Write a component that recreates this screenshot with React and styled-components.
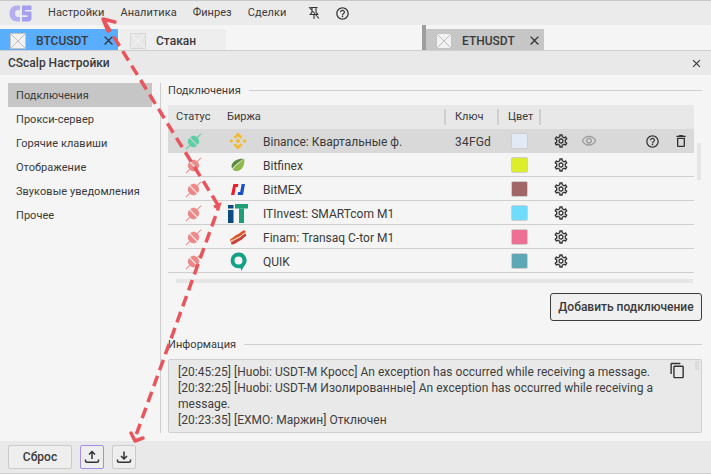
import React from 'react'
import styled, { createGlobalStyle } from 'styled-components'
import {
  MdOutlineSettings,
  MdOutlineVisibility,
  MdHelpOutline,
  MdOutlineDelete,
  MdOutlineContentCopy,
  MdClose,
} from 'react-icons/md'

const GlobalStyle = createGlobalStyle`
  html, body {
    margin: 0;
    padding: 0;
    background: #f5f5f5;
  }
  * { box-sizing: border-box; }
`

const Page = styled.div`
  position: relative;
  width: 711px;
  height: 474px;
  overflow: hidden;
  display: flex;
  flex-direction: column;
  background: #f5f5f5;
  color: #3a3a3a;
  font-family: Roboto, "Liberation Sans", sans-serif;
  font-size: 12px;
`

const MenuBar = styled.div`
  height: 25px;
  display: flex;
  align-items: center;
  padding-left: 9px;
  background: #ebebeb;
  border-top: 1px solid #c8c8c8;
`

const MenuItem = styled.span`
  margin-right: 16px;
  margin-bottom: 2px;
  font-size: 11px;
  letter-spacing: 0.05px;
`

const MenuIcon = styled.span`
  display: flex;
  width: 16px;
  justify-content: center;
  margin-left: 4px;
  margin-right: 8px;
`

const Logo = styled.svg`
  width: 23px;
  height: 17px;
  margin-right: 16px;
`

const TabBar = styled.div`
  height: 25px;
  display: flex;
  align-items: flex-end;
  background: #f5f5f5;
`

const Tab = styled.div`
  height: 21px;
  width: ${p => p.$width}px;
  margin-left: ${p => p.$gap || 0}px;
  display: flex;
  align-items: center;
  padding: 2px 0 0 10px;
  background: ${p => p.$bg};
  font-size: 12px;
  font-weight: 500;
  color: #3a3a3a;
`

const TabName = styled.span`
  margin-left: 10px;
  flex: 1;
`

const TabClose = styled(MdClose)`
  font-size: 15px;
  margin-right: 2px;
  color: #333;
`

const TabDivider = styled.div`
  width: 4px;
  height: 25px;
  margin-left: 196px;
  background: #9e9e9e;
`

const Thumb = styled.svg`
  width: 16px;
  height: 16px;
  flex: none;
`

const Window = styled.div`
  flex: 1;
  display: flex;
  flex-direction: column;
  border-top: 1px solid #cfcfcf;
  min-height: 0;
`

const TitleBar = styled.div`
  height: 24px;
  flex: none;
  display: flex;
  align-items: center;
  justify-content: space-between;
  padding: 0 8px;
  background: #e9e9e9;
  font-weight: 500;
  font-size: 12px;
  color: #3a3a3a;
`

const Body = styled.div`
  flex: 1;
  display: flex;
  padding: 8px 9px 8px 8px;
  min-height: 0;
`

const Sidebar = styled.div`
  width: 153px;
  flex: none;
  border-right: 1px solid #cfcfcf;
  padding-right: 8px;
  height: 350px;
`

const SideItem = styled.div`
  height: 24px;
  line-height: 26px;
  padding-left: 8px;
  font-size: 11px;
  letter-spacing: 0.05px;
  background: ${p => (p.$active ? '#c6c6c6' : 'transparent')};
`

const Main = styled.div`
  flex: 1;
  padding-left: 7px;
  min-width: 0;
  display: flex;
  flex-direction: column;
`

const Section = styled.div`
  height: 14px;
  display: flex;
  align-items: center;
  gap: 8px;
  font-size: 11px;
  letter-spacing: 0.05px;
  &::after {
    content: '';
    flex: 1;
    height: 1px;
    background: #cfcfcf;
  }
`

const TableWrap = styled.div`
  position: relative;
  margin-top: 8px;
  height: 178px;
  width: 526px;
`

const Row = styled.div`
  display: grid;
  grid-template-columns: 59px 219px 53px 42px 153px;
  height: 24px;
  align-items: center;
  background: ${p => (p.$header ? '#e8e8e8' : p.$active ? '#d9d9d9' : 'transparent')};
  box-shadow: ${p => (p.$header || p.$active ? 'none' : 'inset 0 -1px 0 #cfcfcf')};
`

const HeadCell = styled.div`
  height: 16px;
  line-height: 16px;
  padding-left: ${p => p.$pad || 0}px;
  font-size: 11px;
  border-right: ${p => (p.$bar ? '2px solid #cfcfcf' : 'none')};
`

const StatusCell = styled.div`
  display: flex;
  justify-content: center;
  padding-right: 8px;
`

const ExchangeCell = styled.div`
  display: flex;
  align-items: center;
`

const ExchangeLogo = styled.div`
  width: 20px;
  height: 20px;
  margin-left: 1px;
  margin-right: 15px;
  display: flex;
  align-items: center;
  justify-content: center;
`

const ExchangeName = styled.span`
  margin-top: 2px;
`

const KeyCell = styled.div`
  padding: 2px 0 0 9px;
  letter-spacing: 0.2px;
`

const Swatch = styled.div`
  width: 17px;
  height: 16px;
  margin-left: 12px;
  border-radius: 2px;
  border: 1px solid #cfcfcf;
  background: ${p => p.$color};
`

const ActionCell = styled.div`
  display: flex;
  align-items: center;
  padding-left: 12px;
`

const GearIcon = styled(MdOutlineSettings)`
  font-size: 16px;
  color: #333;
`

const EyeIcon = styled(MdOutlineVisibility)`
  font-size: 16px;
  color: #9a9a9a;
  margin-left: 12px;
`

const HelpIcon = styled(MdHelpOutline)`
  font-size: 15px;
  margin-left: auto;
  color: #333;
`

const TrashIcon = styled(MdOutlineDelete)`
  font-size: 16px;
  margin-left: 13px;
  margin-right: 5px;
  color: #333;
`

const VScroll = styled.div`
  position: absolute;
  top: 38px;
  right: -7px;
  width: 4px;
  height: 37px;
  background: #e6e6e6;
`

const HScroll = styled.div`
  position: absolute;
  top: 174px;
  left: 8px;
  right: 1px;
  height: 4px;
  background: #e6e6e6;
`

const AddRow = styled.div`
  display: flex;
  justify-content: flex-end;
  margin-top: 10px;
`

const AddButton = styled.div`
  width: 152px;
  height: 28px;
  display: flex;
  align-items: center;
  justify-content: center;
  border: 1px solid #3c3c3c;
  border-radius: 3px;
  background: #f0f0f0;
  font-size: 12px;
  font-weight: 500;
  color: #3a3a3a;
`

const InfoSection = styled(Section)`
  margin-top: 16px;
`

const InfoBox = styled.div`
  position: relative;
  margin-top: 8px;
  height: 74px;
  padding: 4px 9px;
  background: #e9e9e9;
  border: 1px solid #cfcfcf;
  border-radius: 2px;
  font-size: 12px;
  line-height: 16px;
  letter-spacing: 0.03px;
  color: #3d3d3d;
  overflow: hidden;
`

const CopyIcon = styled(MdOutlineContentCopy)`
  position: absolute;
  top: 2px;
  right: 15px;
  font-size: 17px;
  color: #333;
`

const InfoScroll = styled.div`
  position: absolute;
  top: 1px;
  right: 2px;
  width: 4px;
  height: 9px;
  background: #dcdcdc;
`

const Footer = styled.div`
  height: 33px;
  flex: none;
  display: flex;
  align-items: flex-start;
  gap: 8px;
  padding: 4px 8px 0;
  background: #e9e9e9;
  border-bottom: 1px solid #cfcfcf;
`

const FooterButton = styled.div`
  width: ${p => p.$width}px;
  height: 24px;
  display: flex;
  align-items: center;
  justify-content: center;
  background: #eeeeee;
  border: 1px solid ${p => (p.$focus ? '#a78bea' : '#cbcbcb')};
  border-radius: 2px;
  font-size: 12px;
  font-weight: 500;
  color: #3a3a3a;
`

const ArrowLayer = styled.svg`
  position: absolute;
  left: 0;
  top: 0;
  pointer-events: none;
`

const EmptyThumb = ({ light }) => (
  <Thumb viewBox="0 0 16 16">
    <rect x="0.5" y="0.5" width="15" height="15" fill={light ? '#e8e8e8' : '#f2f2f2'} stroke={light ? '#d6d6d6' : '#c4c4c4'} />
    <path d="M1 1 L15 15 M15 1 L1 15" stroke={light ? '#f5f5f5' : '#bdbdbd'} strokeWidth="1" />
  </Thumb>
)

const Plug = ({ color }) => (
  <svg width="17" height="17" viewBox="0 0 16 16">
    <g transform="rotate(45 8 8)" fill={color}>
      <rect x="7.5" y="-2" width="1" height="5" />
      <rect x="7.5" y="13" width="1" height="5" />
      <path d="M3 7.5 C3 4.5 5 2.8 8 2.8 C11 2.8 13 4.5 13 7.5 Z" />
      <path d="M3 8.5 H13 C13 11.5 11 13.2 8 13.2 C5 13.2 3 11.5 3 8.5 Z" />
    </g>
  </svg>
)

const Binance = () => (
  <svg width="18" height="18" viewBox="0 0 20 20" fill="#f3ba2f">
    <path d="M10 0.5 L15 5.5 L12.9 7.5 L10 4.6 L7.1 7.5 L5 5.5 Z" />
    <path d="M10 19.5 L5 14.5 L7.1 12.5 L10 15.4 L12.9 12.5 L15 14.5 Z" />
    <path d="M0.5 10 L2.7 7.8 L4.9 10 L2.7 12.2 Z" />
    <path d="M15.1 10 L17.3 7.8 L19.5 10 L17.3 12.2 Z" />
    <path d="M10 7.2 L12.8 10 L10 12.8 L7.2 10 Z" />
  </svg>
)

const Bitfinex = () => (
  <svg width="14" height="14" viewBox="0 0 20 20">
    <path d="M19 1 C20 10 16 18 8.5 18.5 C5.5 18.7 3.5 17.5 2.5 16 C7 10 13 6 19 1 Z" fill="#8fb84d" />
    <path d="M18 1 C10 1 3 3.5 1 10 C0.4 12.2 1 14 1.8 15 C6 9.5 12 5 18 1 Z" fill="#5c8a3a" />
  </svg>
)

const BitMEX = () => (
  <svg width="14" height="11" viewBox="0 0 14 11">
    <path d="M2.4 0 H7.4 L6.9 3 H4.8 L3.4 11 H0 Z" fill="#e8202a" />
    <path d="M8.6 0 H14 L12 11 H6.6 L7.1 8 H9.2 L10.6 0 Z" fill="#1d4fc4" />
  </svg>
)

const ITInvest = () => (
  <svg width="20" height="19" viewBox="0 0 20 19">
    <rect x="0" y="6" width="5.5" height="13" fill="#0c4a86" />
    <rect x="0" y="1" width="5.5" height="3.5" fill="#0c4a86" />
    <rect x="7" y="0" width="13" height="4.5" fill="#1f9d76" />
    <rect x="11" y="4.5" width="5" height="14.5" fill="#1f9d76" />
  </svg>
)

const Finam = () => (
  <svg width="16" height="15" viewBox="0 0 16 15" fill="none" strokeLinecap="round">
    <path d="M1.5 10 C4 10 5 6.5 7.5 6 C10 5.5 11 3 14 1.8" stroke="#d9582e" strokeWidth="3" />
    <path d="M2.5 13 C5 13 6.5 10 9 9.5 C11.5 9 12.5 6.5 14.8 5" stroke="#c9423a" strokeWidth="3" />
    <path d="M1.5 10.5 C4.5 10.5 6 8 8 7.7 C10 7.3 12 4.8 14.5 3.4" stroke="#f6e2c0" strokeWidth="1" />
  </svg>
)

const Quik = () => (
  <svg width="17" height="19" viewBox="0 0 16 18">
    <path d="M8 0.5 A7.5 7.5 0 1 0 8 15.5 L10 15.2 L10.5 18 L13.5 13.2 A7.5 7.5 0 0 0 8 0.5 Z M8 4.2 A3.8 3.8 0 1 1 8 11.8 A3.8 3.8 0 0 1 8 4.2 Z" fill="#12a185" fillRule="evenodd" />
  </svg>
)

const rows = [
  { name: 'Binance: Квартальные ф.', logo: <Binance />, color: '#e2eaf6', active: true, key: '34FGd', online: true },
  { name: 'Bitfinex', logo: <Bitfinex />, color: '#dcee2a' },
  { name: 'BitMEX', logo: <BitMEX />, color: '#a06668' },
  { name: 'ITInvest: SMARTcom M1', logo: <ITInvest />, color: '#6fdcfb' },
  { name: 'Finam: Transaq C-tor M1', logo: <Finam />, color: '#ee6f94' },
  { name: 'QUIK', logo: <Quik />, color: '#5ca8b6' },
]

const sideItems = ['Подключения', 'Прокси-сервер', 'Горячие клавиши', 'Отображение', 'Звуковые уведомления', 'Прочее']

export default function App() {
  return (
    <Page>
      <GlobalStyle />
      <MenuBar>
        <Logo viewBox="0 0 23 17">
          <path d="M11 0.5 V5 H9 C7 5 6 6.5 6 8.5 C6 10.5 7 12 9 12 H11 V16.5 H8 C3.5 16.5 0.5 13 0.5 8.5 C0.5 4 3.5 0.5 8 0.5 Z" fill="#b4aef2" />
          <path d="M13 0.5 H22.5 V5 H16 V6.5 H22.5 V13.5 C22.5 15.5 21 16.5 19.5 16.5 H13 V12 H18.5 V10.3 H13 Z" fill="#a69fee" />
        </Logo>
        <MenuItem>Настройки</MenuItem>
        <MenuItem>Аналитика</MenuItem>
        <MenuItem>Финрез</MenuItem>
        <MenuItem>Сделки</MenuItem>
        <MenuIcon>
          <svg width="14" height="14" viewBox="0 0 14 14" fill="none" stroke="#333" strokeWidth="1.1">
            <path d="M3.5 1.5 H10.5 M5 1.5 V6 L3.2 8.5 H10.8 L9 6 V1.5 M7 8.5 V13 M2 1 L12 12.5" />
          </svg>
        </MenuIcon>
        <MenuIcon>
          <MdHelpOutline size={15} color="#333" />
        </MenuIcon>
      </MenuBar>
      <TabBar>
        <Tab $width={118} $bg="#5aaeff">
          <EmptyThumb />
          <TabName>BTCUSDT</TabName>
          <TabClose />
        </Tab>
        <Tab $width={106} $gap={2} $bg="#eeeeee">
          <EmptyThumb light />
          <TabName>Стакан</TabName>
        </Tab>
        <TabDivider />
        <Tab $width={118} $bg="#c6c6c6">
          <EmptyThumb />
          <TabName>ETHUSDT</TabName>
          <TabClose />
        </Tab>
      </TabBar>
      <Window>
        <TitleBar>
          CScalp Настройки
          <MdClose size={13} color="#333" />
        </TitleBar>
        <Body>
          <Sidebar>
            {sideItems.map((item, i) => (
              <SideItem key={item} $active={i === 0}>{item}</SideItem>
            ))}
          </Sidebar>
          <Main>
            <Section>Подключения</Section>
            <TableWrap>
              <Row $header>
                <HeadCell $pad={8}>Статус</HeadCell>
                <HeadCell $bar>Биржа</HeadCell>
                <HeadCell $bar $pad={9}>Ключ</HeadCell>
                <HeadCell $bar $pad={9}>Цвет</HeadCell>
                <HeadCell />
              </Row>
              {rows.map(r => (
                <Row key={r.name} $active={r.active}>
                  <StatusCell>
                    <Plug color={r.online ? '#5fcda6' : '#ec8a8a'} />
                  </StatusCell>
                  <ExchangeCell>
                    <ExchangeLogo>{r.logo}</ExchangeLogo>
                    <ExchangeName>{r.name}</ExchangeName>
                  </ExchangeCell>
                  <KeyCell>{r.key}</KeyCell>
                  <Swatch $color={r.color} />
                  <ActionCell>
                    <GearIcon />
                    {r.active && (
                      <>
                        <EyeIcon />
                        <HelpIcon />
                        <TrashIcon />
                      </>
                    )}
                  </ActionCell>
                </Row>
              ))}
              <VScroll />
              <HScroll />
            </TableWrap>
            <AddRow>
              <AddButton>Добавить подключение</AddButton>
            </AddRow>
            <InfoSection>Информация</InfoSection>
            <InfoBox>
              [20:45:25] [Huobi: USDT-M Кросс] An exception has occurred while receiving a message.
              <br />
              [20:32:25] [Huobi: USDT-M Изолированные] An exception has occurred while receiving a message.
              <br />
              [20:23:35] [EXMO: Маржин] Отключен
              <CopyIcon />
              <InfoScroll />
            </InfoBox>
          </Main>
        </Body>
        <Footer>
          <FooterButton $width={64}>Сброс</FooterButton>
          <FooterButton $width={24} $focus>
            <svg width="16" height="16" viewBox="0 0 16 16" fill="none" stroke="#333" strokeWidth="1.5">
              <path d="M8 10 V3 M5 5.5 L8 2.5 L11 5.5" />
              <path d="M1.5 10.5 V12 Q1.5 13.2 3 13.2 H13 Q14.5 13.2 14.5 12 V10.5" />
            </svg>
          </FooterButton>
          <FooterButton $width={24}>
            <svg width="16" height="16" viewBox="0 0 16 16" fill="none" stroke="#333" strokeWidth="1.5">
              <path d="M8 2.5 V9.5 M5 7 L8 10 L11 7" />
              <path d="M1.5 10.5 V12 Q1.5 13.2 3 13.2 H13 Q14.5 13.2 14.5 12 V10.5" />
            </svg>
          </FooterButton>
        </Footer>
      </Window>
      <ArrowLayer width="711" height="474" viewBox="0 0 711 474" fill="none" stroke="#e8555c" strokeWidth="3.5">
        <path d="M218 205 L104 21" strokeDasharray="11 6" />
        <path d="M108 31 L103 19 L115 22" strokeLinecap="round" strokeLinejoin="round" />
        <path d="M214 207 L219 205 L217 212 L135 438" strokeDasharray="11 6" />
        <path d="M131 433 L135 441 L143 438" strokeLinecap="round" strokeLinejoin="round" />
      </ArrowLayer>
    </Page>
  )
}
